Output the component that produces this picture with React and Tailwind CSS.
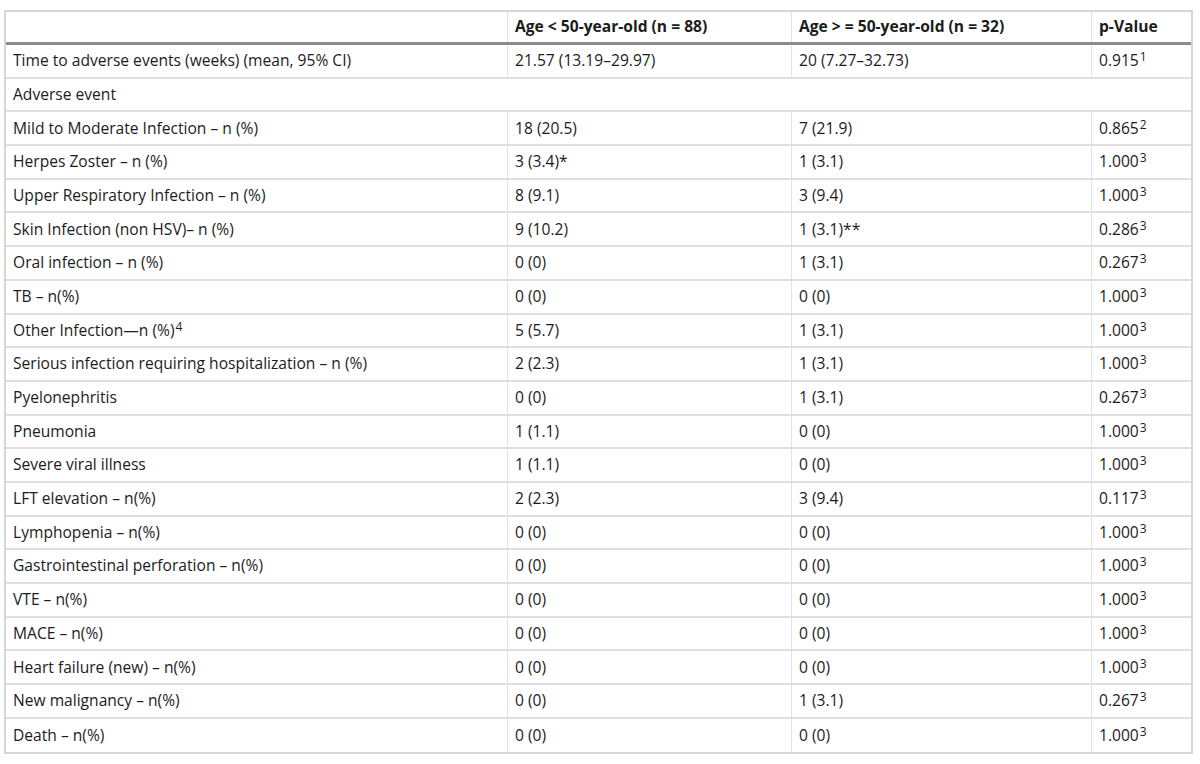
const rows = [
  ["Time to adverse events (weeks) (mean, 95% CI)", "21.57 (13.19–29.97)", "20 (7.27–32.73)", "0.915", "1"],
  ["Adverse event"],
  ["Mild to Moderate Infection – n (%)", "18 (20.5)", "7 (21.9)", "0.865", "2"],
  ["Herpes Zoster – n (%)", "3 (3.4)*", "1 (3.1)", "1.000", "3"],
  ["Upper Respiratory Infection – n (%)", "8 (9.1)", "3 (9.4)", "1.000", "3"],
  ["Skin Infection (non HSV)– n (%)", "9 (10.2)", "1 (3.1)**", "0.286", "3"],
  ["Oral infection – n (%)", "0 (0)", "1 (3.1)", "0.267", "3"],
  ["TB – n(%)", "0 (0)", "0 (0)", "1.000", "3"],
  ["Other Infection—n (%)", "5 (5.7)", "1 (3.1)", "1.000", "3", "4"],
  ["Serious infection requiring hospitalization – n (%)", "2 (2.3)", "1 (3.1)", "1.000", "3"],
  ["Pyelonephritis", "0 (0)", "1 (3.1)", "0.267", "3"],
  ["Pneumonia", "1 (1.1)", "0 (0)", "1.000", "3"],
  ["Severe viral illness", "1 (1.1)", "0 (0)", "1.000", "3"],
  ["LFT elevation – n(%)", "2 (2.3)", "3 (9.4)", "0.117", "3"],
  ["Lymphopenia – n(%)", "0 (0)", "0 (0)", "1.000", "3"],
  ["Gastrointestinal perforation – n(%)", "0 (0)", "0 (0)", "1.000", "3"],
  ["VTE – n(%)", "0 (0)", "0 (0)", "1.000", "3"],
  ["MACE – n(%)", "0 (0)", "0 (0)", "1.000", "3"],
  ["Heart failure (new) – n(%)", "0 (0)", "0 (0)", "1.000", "3"],
  ["New malignancy – n(%)", "0 (0)", "1 (3.1)", "0.267", "3"],
  ["Death – n(%)", "0 (0)", "0 (0)", "1.000", "3"],
];

// footnote marks sit a little above the baseline, not as high as a normal sup
const Sup = ({ children }) => (
  <span className="relative -top-[5px] pl-[1px] align-baseline text-[12px] leading-none">{children}</span>
);

export default function App() {
  return (
    <div className="min-h-[764px] bg-white pl-[4px] pt-[10px] font-['Open_Sans',sans-serif] text-[15.6px] text-[#1c1c1c]">
      <div className="w-[1189px] border-2 border-[#d6d6d6]">
        {/* header */}
        <div className="grid h-[33px] grid-cols-[502px_284px_300px_1fr] border-b-[3px] border-[#8c8c8c] font-bold">
          <div className="border-r border-[#e2e2e2]" />
          <div className="flex items-center border-r border-[#e2e2e2] px-[7px]">Age &lt; 50-year-old (n = 88)</div>
          <div className="flex items-center border-r border-[#e2e2e2] px-[7px]">Age &gt; = 50-year-old (n = 32)</div>
          <div className="flex items-center px-[7px]">p-Value</div>
        </div>

        {rows.map((r, i) =>
          r.length === 1 ? (
            <div
              key={i}
              className="flex h-[33.7px] items-center border-b-2 border-[#dedede] px-[7px]"
            >
              {r[0]}
            </div>
          ) : (
            <div
              key={i}
              className={
                "grid h-[33.7px] grid-cols-[502px_284px_300px_1fr] " +
                (i === rows.length - 1 ? "" : "border-b-2 border-[#dedede]")
              }
            >
              <div className="flex items-center border-r border-[#e2e2e2] px-[7px]">
                <span>
                  {r[0]}
                  {r[5] && <Sup>{r[5]}</Sup>}
                </span>
              </div>
              <div className="flex items-center border-r border-[#e2e2e2] px-[7px]">{r[1]}</div>
              <div className="flex items-center border-r border-[#e2e2e2] px-[7px]">{r[2]}</div>
              <div className="flex items-center px-[7px]">
                <span>
                  {r[3]}
                  <Sup>{r[4]}</Sup>
                </span>
              </div>
            </div>
          )
        )}
      </div>
    </div>
  );
}
